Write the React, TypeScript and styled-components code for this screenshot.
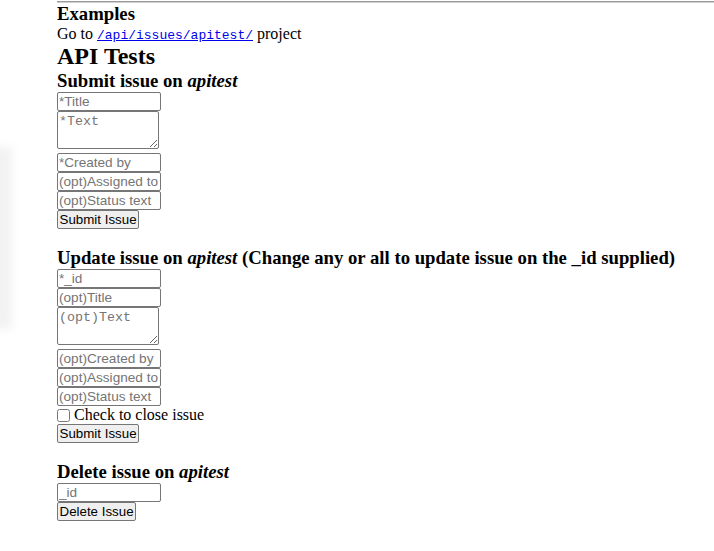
import React from "react";
import styled, { createGlobalStyle } from "styled-components";

const GlobalStyle = createGlobalStyle`
  html, body {
    margin: 0;
    padding: 0;
    background: #ffffff;
  }
  body {
    font-family: "Liberation Serif", "Times New Roman", serif;
    font-size: 16px;
    color: #000000;
    overflow: hidden;
  }
`;

const Page = styled.div`
  position: relative;
  padding-left: 57px;
  min-height: 551px;
  box-sizing: border-box;
`;

const SideShadow = styled.div`
  position: absolute;
  left: -14px;
  top: 146px;
  width: 26px;
  height: 182px;
  background: #f2f2f2;
  filter: blur(4px);
  pointer-events: none;
`;

const Rule = styled.hr`
  margin: 1px 0 0 0;
  height: 0;
  border: 0;
  border-top: 1px solid #9a9a9a;
  border-bottom: 1px solid #cfcfcf;
`;

const SectionTitle = styled.h3`
  margin: 0;
  font-size: 18.72px;
  font-weight: bold;
  line-height: 22px;
`;

const PageTitle = styled.h2`
  margin: 0;
  font-size: 24px;
  font-weight: bold;
  line-height: 27px;
`;

const Para = styled.p`
  margin: 0;
  height: 18px;
  line-height: 18px;
`;

const CodeLink = styled.a`
  font-family: "Liberation Mono", "Courier New", monospace;
  font-size: 13px;
  line-height: 1;
  color: #0000ee;
  text-decoration: underline;
`;

const Form = styled.form<{ $gap?: number }>`
  display: flex;
  flex-direction: column;
  align-items: flex-start;
  margin: 0 0 ${(p) => p.$gap ?? 0}px 0;
`;

const Field = styled.input`
  display: block;
  box-sizing: border-box;
  width: 104px;
  height: 19px;
  margin: 0;
  padding: 0 0 0 1px;
  border: 1px solid #767676;
  border-radius: 2px;
  background: #ffffff;
  font-family: "Liberation Sans", Arial, sans-serif;
  font-size: 13.6px;
  color: #000000;
  outline: none;
  &::placeholder {
    color: #757575;
  }
`;

const TextField = styled.textarea`
  display: block;
  box-sizing: border-box;
  width: 102px;
  height: 38px;
  margin: 0 0 4px 0;
  padding: 2px 1px;
  border: 1px solid #767676;
  border-radius: 2px;
  background: #ffffff;
  font-family: "Liberation Mono", "Courier New", monospace;
  font-size: 13.33px;
  line-height: 15px;
  resize: both;
  outline: none;
  &::placeholder {
    color: #757575;
  }
`;

const Button = styled.button`
  box-sizing: border-box;
  height: 19px;
  margin: 0;
  padding: 0 1.5px;
  border: 1px solid #767676;
  border-radius: 2px;
  background: #efefef;
  font-family: "Liberation Sans", Arial, sans-serif;
  font-size: 13.33px;
  line-height: 15px;
  color: #000000;
  white-space: nowrap;
`;

const CheckRow = styled.label`
  display: flex;
  align-items: center;
  height: 18px;
  font-size: 16px;
  line-height: 18px;
`;

const Check = styled.input`
  width: 13px;
  height: 13px;
  margin: 0 4px 0 0;
`;

export default function App() {
  return (
    <>
      <GlobalStyle />
      <Page>
        <SideShadow />
        <Rule />
        <SectionTitle>Examples</SectionTitle>
        <Para>
          Go to <CodeLink href="#">/api/issues/apitest/</CodeLink> project
        </Para>
        <PageTitle>API Tests</PageTitle>

        <SectionTitle>
          Submit issue on <i>apitest</i>
        </SectionTitle>
        <Form $gap={18} onSubmit={(e) => e.preventDefault()}>
          <Field type="text" placeholder="*Title" />
          <TextField placeholder="*Text" />
          <Field type="text" placeholder="*Created by" />
          <Field type="text" placeholder="(opt)Assigned to" />
          <Field type="text" placeholder="(opt)Status text" />
          <Button type="submit">Submit Issue</Button>
        </Form>

        <SectionTitle>
          Update issue on <i>apitest</i> (Change any or all to update issue on
          the _id supplied)
        </SectionTitle>
        <Form $gap={18} onSubmit={(e) => e.preventDefault()}>
          <Field type="text" placeholder="*_id" />
          <Field type="text" placeholder="(opt)Title" />
          <TextField placeholder="(opt)Text" />
          <Field type="text" placeholder="(opt)Created by" />
          <Field type="text" placeholder="(opt)Assigned to" />
          <Field type="text" placeholder="(opt)Status text" />
          <CheckRow>
            <Check type="checkbox" />
            Check to close issue
          </CheckRow>
          <Button type="submit">Submit Issue</Button>
        </Form>

        <SectionTitle>
          Delete issue on <i>apitest</i>
        </SectionTitle>
        <Form onSubmit={(e) => e.preventDefault()}>
          <Field type="text" placeholder="_id" />
          <Button type="submit">Delete Issue</Button>
        </Form>
      </Page>
    </>
  );
}
